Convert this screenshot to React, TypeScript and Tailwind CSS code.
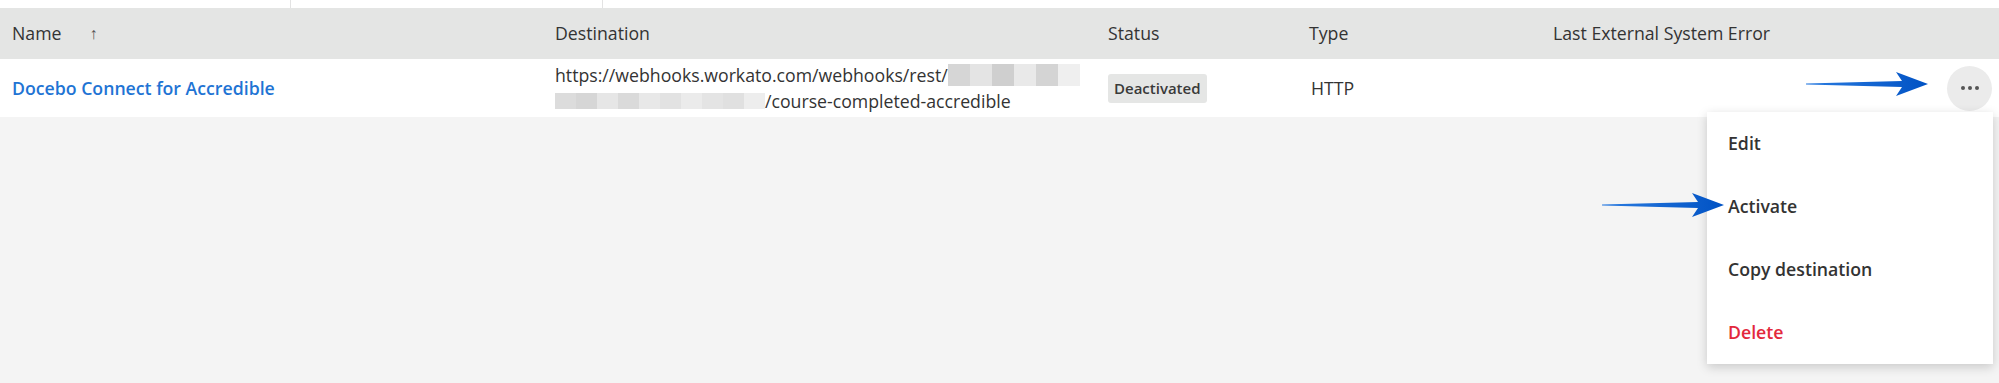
import React from 'react';

const COLS = 'grid grid-cols-[543px_553px_201px_244px_1fr]';

const MENU = [
  { label: 'Edit', danger: false },
  { label: 'Activate', danger: false },
  { label: 'Copy destination', danger: false },
  { label: 'Delete', danger: true },
];

// pixelated redaction blocks
const BLUR_1 = ['#d6d6d6', '#e4e4e4', '#cfcfcf', '#e9e9e9', '#d4d4d4', '#efefef'];
const BLUR_2 = ['#dcdcdc', '#d6d6d6', '#e6e6e6', '#dadada', '#e8e8e8', '#e2e2e2', '#ebebeb', '#e4e4e4', '#e0e0e0', '#ededed'];

function Arrow({ className }: { className: string }) {
  return (
    <svg className={className} width="122" height="28" viewBox="0 0 122 28">
      <defs>
        <linearGradient id="ag" x1="0" x2="1" y1="0" y2="0">
          <stop offset="0" stopColor="#2a7be0" />
          <stop offset="1" stopColor="#0052c4" />
        </linearGradient>
      </defs>
      <path d="M0 13.4 L96 11 L90 2 L122 14 L90 26 L96 17 L0 14.6 Z" fill="url(#ag)" strokeLinejoin="round" />
    </svg>
  );
}

export default function App() {
  return (
    <div className="relative w-[1999px] h-[383px] bg-[#f4f4f4] font-['Open_Sans',sans-serif] text-[#333] overflow-hidden">
      {/* top strip */}
      <div className="flex h-2 bg-white">
        <div className="w-[291px] border-r border-[#e3e3e3]" />
        <div className="w-[312px] border-r border-[#e3e3e3]" />
      </div>

      {/* header */}
      <div className={`${COLS} h-[51px] items-center bg-[#e4e5e4] text-[17.7px]`}>
        <div className="pl-3 flex items-center">
          Name
          <span className="ml-[28px] text-[16px] text-[#555]">↑</span>
        </div>
        <div className="pl-3">Destination</div>
        <div className="pl-3">Status</div>
        <div className="pl-3">Type</div>
        <div className="pl-3">Last External System Error</div>
      </div>

      {/* row */}
      <div className={`${COLS} h-[58px] items-center bg-white text-[17.7px]`}>
        <div className="pl-3 font-semibold text-[#1f74d4]">Docebo Connect for Accredible</div>
        <div className="pl-3 leading-[26px] text-[#333]">
          <div className="flex items-center">
            https://webhooks.workato.com/webhooks/rest/
            <span className="flex h-[22px]">
              {BLUR_1.map((c, i) => (
                <span key={i} className="w-[22px] h-full" style={{ backgroundColor: c }} />
              ))}
            </span>
          </div>
          <div className="flex items-center">
            <span className="flex h-[16px]">
              {BLUR_2.map((c, i) => (
                <span key={i} className="w-[21px] h-full" style={{ backgroundColor: c }} />
              ))}
            </span>
            /course-completed-accredible
          </div>
        </div>
        <div className="pl-3">
          <span className="inline-flex items-center h-[29px] px-[6px] rounded-[3px] bg-[#e5e6e5] text-[15px] font-semibold text-[#3a3a3a]">
            Deactivated
          </span>
        </div>
        <div className="pl-[14px]">HTTP</div>
        <div className="flex justify-end pr-[7px]">
          <button className="w-[45px] h-[45px] rounded-full bg-[#ebebeb] flex items-center justify-center gap-[3px]">
            <span className="w-[4px] h-[4px] rounded-full bg-[#555]" />
            <span className="w-[4px] h-[4px] rounded-full bg-[#555]" />
            <span className="w-[4px] h-[4px] rounded-full bg-[#555]" />
          </button>
        </div>
      </div>

      {/* dropdown menu */}
      <div className="absolute left-[1707px] top-[112px] w-[286px] bg-white shadow-[0_3px_10px_rgba(0,0,0,0.18)]">
        {MENU.map((m) => (
          <div
            key={m.label}
            className={`h-[63px] flex items-center pl-[21px] text-[17.7px] font-semibold ${m.danger ? 'text-[#e3283c]' : 'text-[#333]'}`}
          >
            {m.label}
          </div>
        ))}
      </div>

      {/* annotation arrows */}
      <Arrow className="absolute left-[1806px] top-[70px]" />
      <Arrow className="absolute left-[1602px] top-[191px]" />
    </div>
  );
}
